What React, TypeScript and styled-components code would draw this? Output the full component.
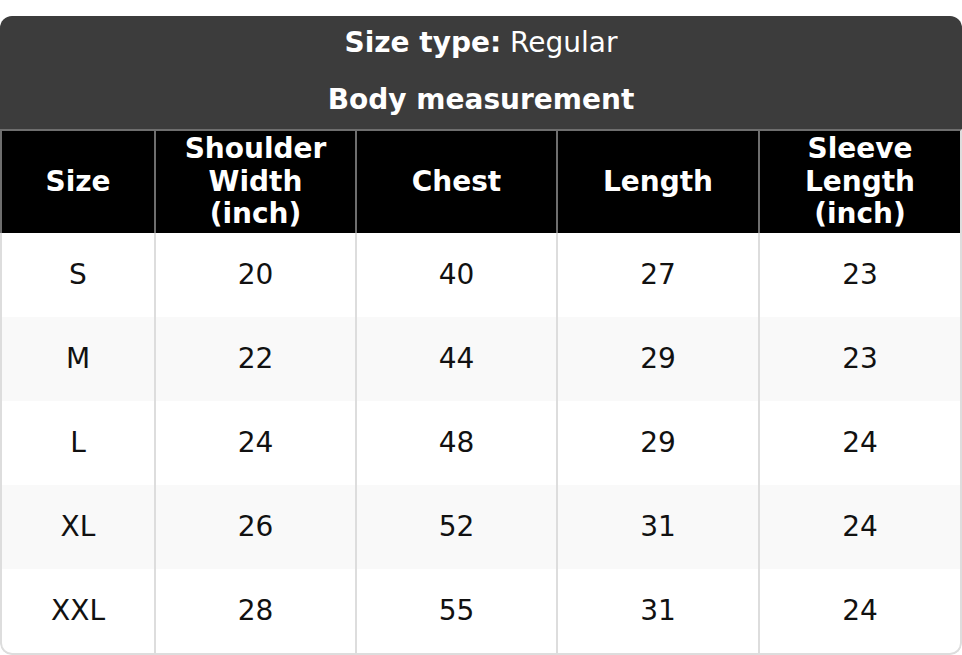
import React from "react";
import styled, { createGlobalStyle } from "styled-components";

const GlobalStyle = createGlobalStyle`
    body {
        margin: 0;
        background: #ffffff;
        font-family: "DejaVu Sans", "Liberation Sans", sans-serif;
    }
`;

const Card = styled.div`
    margin-top: 16px;
    border-radius: 12px;
    overflow: hidden;
    background: #ffffff;
`;

const TitleBlock = styled.div`
    box-sizing: border-box;
    height: 113px;
    padding: 11px 0 13px;
    display: flex;
    flex-direction: column;
    align-items: center;
    gap: 24px;
    background: #3c3c3c;
    color: #ffffff;
    font-size: 28px;
    line-height: 32.6px;
`;

const TitleLine = styled.div<{ $bold?: boolean }>`
    font-weight: ${(p) => (p.$bold ? 700 : 400)};
`;

const Table = styled.table`
    width: 100%;
    table-layout: fixed;
    border-collapse: separate;
    border-spacing: 0;
    font-size: 28px;
    line-height: 32.6px;
`;

const HeadCell = styled.th`
    height: 102px;
    padding: 0 2px;
    background: #000000;
    color: #ffffff;
    font-weight: 700;
    text-align: center;
    vertical-align: middle;
    border-top: 2px solid #6e6e6e;
    border-left: 2px solid #6e6e6e;
    &:last-child {
        border-right: 2px solid #dddddd;
    }
`;

const BodyRow = styled.tr<{ $shade: boolean }>`
    background: ${(p) => (p.$shade ? "#f9f9f9" : "#ffffff")};
    &:last-child td {
        border-bottom: 2px solid #dddddd;
    }
    &:last-child td:first-child {
        border-bottom-left-radius: 12px;
    }
    &:last-child td:last-child {
        border-bottom-right-radius: 12px;
    }
`;

const Cell = styled.td`
    height: 84px;
    padding: 0;
    text-align: center;
    vertical-align: middle;
    color: #111111;
    border-left: 2px solid #dddddd;
    &:last-child {
        border-right: 2px solid #dddddd;
    }
`;

const headers = ["Size", "Shoulder Width (inch)", "Chest", "Length", "Sleeve Length (inch)"];

const rows = [
    ["S", "20", "40", "27", "23"],
    ["M", "22", "44", "29", "23"],
    ["L", "24", "48", "29", "24"],
    ["XL", "26", "52", "31", "24"],
    ["XXL", "28", "55", "31", "24"],
];

const widths = [154, 201, 201, 202, 204];

export default function App() {
    return (
        <>
            <GlobalStyle />
            <Card>
                <TitleBlock>
                    <TitleLine>
                        <b>Size type:</b> Regular
                    </TitleLine>
                    <TitleLine $bold>Body measurement</TitleLine>
                </TitleBlock>
                <Table>
                    <colgroup>
                        {widths.map((w, i) => (
                            <col key={`col-${i}`} style={{ width: `${w}px` }} />
                        ))}
                    </colgroup>
                    <thead>
                        <tr>
                            {headers.map((h) => (
                                <HeadCell key={h}>{h}</HeadCell>
                            ))}
                        </tr>
                    </thead>
                    <tbody>
                        {rows.map((r, i) => (
                            <BodyRow key={r[0]} $shade={i % 2 === 1}>
                                {r.map((v, j) => (
                                    <Cell key={`cell-${i}-${j}`}>{v}</Cell>
                                ))}
                            </BodyRow>
                        ))}
                    </tbody>
                </Table>
            </Card>
        </>
    );
}
